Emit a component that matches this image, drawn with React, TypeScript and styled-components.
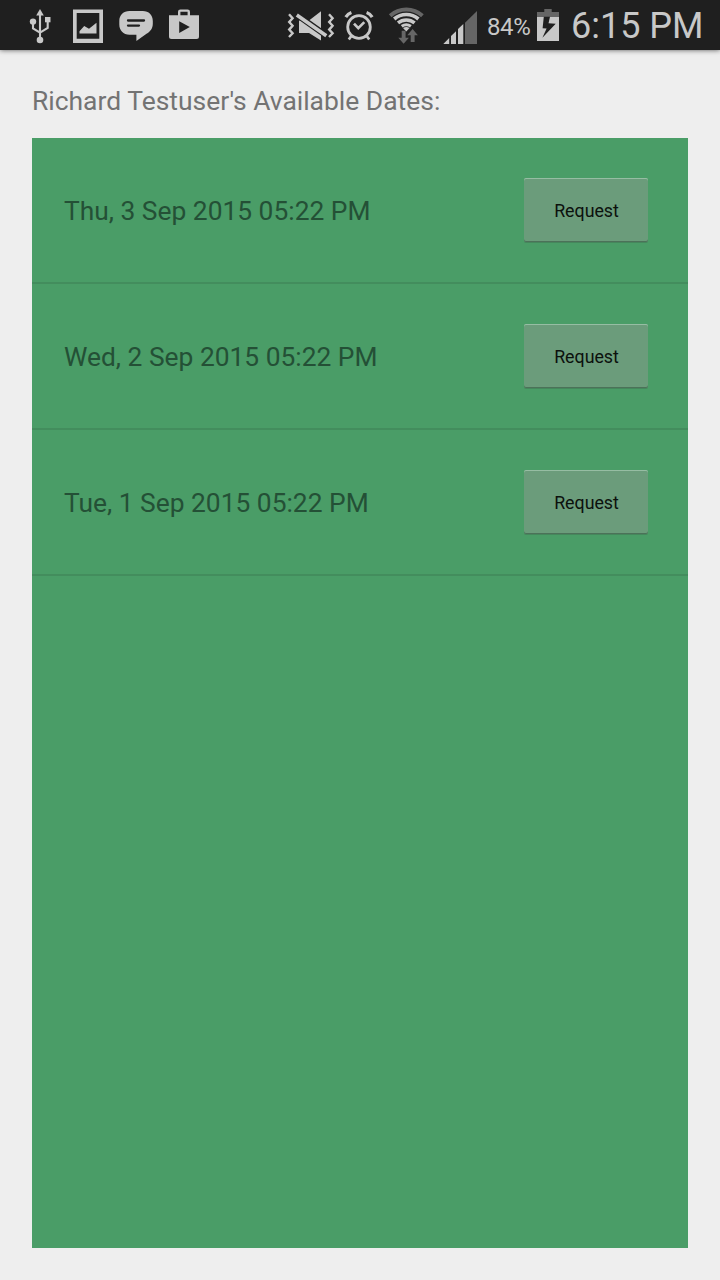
import React from "react";
import styled, { createGlobalStyle } from "styled-components";

const LIGHT = "#c8c8c8";
const DIM = "#666666";
const BAR = "#1f1f1f";

const GlobalStyle = createGlobalStyle`
  * { box-sizing: border-box; }
  body { margin: 0; background: #eeeeee; font-family: Roboto, sans-serif; }
`;

const Screen = styled.div`
  display: flex;
  flex-direction: column;
  width: 720px;
  height: 1280px;
  background: #eeeeee;
  overflow: hidden;
`;

const StatusBar = styled.header`
  display: flex;
  flex: none;
  align-items: flex-start;
  height: 50px;
  padding-left: 28px;
  background: ${BAR};
  color: ${LIGHT};
  box-shadow: 0 0 5px rgba(0, 0, 0, 0.65);
`;

const Icon = styled.svg<{ $gap?: number }>`
  display: block;
  flex: none;
  margin-left: ${(p) => p.$gap ?? 0}px;
`;

const Battery = styled.span`
  width: 48px;
  margin-left: 9px;
  font-size: 24px;
  letter-spacing: -0.4px;
  line-height: 54px;
  white-space: nowrap;
`;

const Clock = styled.span`
  margin-left: 12px;
  font-size: 36px;
  line-height: 53px;
  white-space: nowrap;
`;

const Content = styled.main`
  display: flex;
  flex: 1;
  flex-direction: column;
  padding: 32px 32px;
`;

const Title = styled.h1`
  height: 56px;
  margin: 0;
  color: #737373;
  font-size: 26.44px;
  font-weight: 400;
  line-height: 38px;
  white-space: nowrap;
`;

const DateList = styled.ul`
  flex: 1;
  margin: 0;
  padding: 0;
  background: #4a9d67;
  list-style: none;
`;

const DateRow = styled.li`
  display: flex;
  align-items: center;
  justify-content: space-between;
  height: 146px;
  padding: 0 40px 0 32px;
  border-bottom: 2px solid #438d5d;
`;

const DateText = styled.span`
  color: #245036;
  font-size: 26.37px;
  line-height: 32px;
  padding-top: 2px;
  white-space: nowrap;
`;

const RequestButton = styled.button`
  width: 124px;
  height: 64px;
  padding: 1px 0 0 1px;
  border: 0;
  border-radius: 2px;
  background: #6b9c7b;
  box-shadow: inset 0 1px 0 #96bda3, inset 0 -1px 0 #4c7259, 0 1px 0 rgba(60, 95, 72, 0.35);
  color: #0b110d;
  font-family: inherit;
  font-size: 17.8px;
`;

function UsbIcon() {
  return (
    <Icon width="24" height="50" viewBox="28 0 24 50" fill={LIGHT}>
      <path d="M40 9l3.8 6.5h-7.6z" />
      <path d="M40 14v25M33 21v7.5l7 4.2M47.7 20v8L40 32.7" fill="none" stroke={LIGHT} strokeWidth="2.1" />
      <circle cx="40" cy="40" r="3.3" />
      <circle cx="33" cy="21.6" r="3.2" />
      <path d="M45 17h5.5v5.3H45z" />
    </Icon>
  );
}

function ImageIcon() {
  return (
    <Icon $gap={21} width="30" height="50" viewBox="73 0 30 50" fill={LIGHT}>
      <path fillRule="evenodd" d="M73 9.5h30V43H73zM76.7 13v25.7h22.6V13z" />
      <path d="M79.5 33.5v-2.2l4.7-5.3 4.8 2.7 7.5-5.9v10.7z" />
    </Icon>
  );
}

function ChatIcon() {
  return (
    <Icon $gap={16} width="34" height="50" viewBox="119 0 34 50" fill={LIGHT}>
      <path d="M129.5 11h13.3c6 0 10 4 10 10v3c0 4.5-2.5 7.5-6.3 9.8L136.4 41v-6.2h-6.9c-6.2 0-10.2-4.4-10.2-10.3V21c0-6 4.2-10 10.2-10z" />
      <path d="M128 20.5h16M128 25.6h11" fill="none" stroke={BAR} strokeWidth="2.3" strokeLinecap="round" />
    </Icon>
  );
}

function StoreIcon() {
  return (
    <Icon $gap={16} width="30" height="50" viewBox="169 0 30 50" fill={LIGHT}>
      <path d="M179.2 16v-4.2q0-1.2 1.2-1.2h7.2q1.2 0 1.2 1.2V16" fill="none" stroke={LIGHT} strokeWidth="2.4" />
      <path fillRule="evenodd" d="M169 15.3h30v21.2q0 2.5-2.5 2.5h-25q-2.5 0-2.5-2.5zM179.2 21.3v11.6l10.6-5.8z" />
    </Icon>
  );
}

function SilentIcon() {
  return (
    <Icon $gap={88} width="48" height="50" viewBox="287 0 48 50" fill={LIGHT}>
      <path d="M299 20.5h10l12-9.3v29.3l-12-7.5h-10z" />
      <path d="M296.5 14.5l30 21.3" stroke={BAR} strokeWidth="6" />
      <path d="M296.8 15l29.5 20.7" stroke={LIGHT} strokeWidth="3.6" />
      <path d="M289 14.3l3.6 4-3.4 3.7 3.4 3.8-3.4 3.8 3.4 3.7-3.6 3.7M329 14.3l3.6 4-3.4 3.7 3.4 3.8-3.4 3.8 3.4 3.7-3.6 3.7" fill="none" stroke={LIGHT} strokeWidth="2.4" />
    </Icon>
  );
}

function AlarmIcon() {
  return (
    <Icon $gap={9} width="31" height="50" viewBox="344 0 31 50" fill="none" stroke={LIGHT}>
      <circle cx="359" cy="27" r="11.3" strokeWidth="2.8" />
      <path d="M354 23.6l4.3 4.5 6-6M351.3 36l-2.5 3.5M366.7 36l2.5 3.5" strokeWidth="2.7" />
      <path d="M345.8 17.2q2-3.3 5.6-4.6M372.2 17.2q-2-3.3-5.6-4.6" strokeWidth="3.2" />
    </Icon>
  );
}

function WifiIcon() {
  return (
    <Icon $gap={13} width="38" height="50" viewBox="388 0 38 50" fill="none">
      <path d="M390.2 15.7a24 24 0 0 1 32.2 0" stroke={DIM} strokeWidth="4" />
      <path d="M394.2 19a18.5 18.5 0 0 1 24.2 0" stroke={LIGHT} strokeWidth="3.7" />
      <path d="M398 22.9a13 13 0 0 1 16.6 0" stroke={LIGHT} strokeWidth="3.5" />
      <path d="M401.7 26.3a8 8 0 0 1 9.2 0" stroke={LIGHT} strokeWidth="3" />
      <path d="M403 28q3.3-1.8 6.6 0l-3.3 3.6z" fill={LIGHT} />
      <path d="M401.7 30.7h3.9v7h3.3l-5.3 6-5.3-6h3.4zM410.7 42v-6.8h-3.4l5.3-6.3 5.3 6.3h-3.3V42z" fill={DIM} />
    </Icon>
  );
}

function SignalIcon() {
  return (
    <Icon $gap={17} width="35" height="50" viewBox="443 0 35 50" fill={LIGHT}>
      <path d="M443.3 44l5.9-6v6zM451 44v-8l5-4.8V44zM458 44V29l5.3-5V44z" />
      <path d="M465 44V22.8L477 11v33z" fill={DIM} />
    </Icon>
  );
}

function BatteryIcon() {
  return (
    <Icon width="22" height="50" viewBox="537 0 22 50" $gap={2} fill={LIGHT}>
      <path d="M537 12h7.3V9h7.4v3h7.3v5h-22z" fill={DIM} />
      <path d="M537 17h22v24h-22z" />
      <path d="M543.8 16.7h6.2l-1.5 6.6 7.2.5-13.3 14 4.2-9.2-4-.4z" fill={BAR} />
    </Icon>
  );
}

const dates = [
  "Thu, 3 Sep 2015 05:22 PM",
  "Wed, 2 Sep 2015 05:22 PM",
  "Tue, 1 Sep 2015 05:22 PM",
];

export default function App() {
  return (
    <Screen>
      <GlobalStyle />
      <StatusBar>
        <UsbIcon />
        <ImageIcon />
        <ChatIcon />
        <StoreIcon />
        <SilentIcon />
        <AlarmIcon />
        <WifiIcon />
        <SignalIcon />
        <Battery>84%</Battery>
        <BatteryIcon />
        <Clock>6:15 PM</Clock>
      </StatusBar>
      <Content>
        <Title>Richard Testuser's Available Dates:</Title>
        <DateList>
          {dates.map((date) => (
            <DateRow key={date}>
              <DateText>{date}</DateText>
              <RequestButton>Request</RequestButton>
            </DateRow>
          ))}
        </DateList>
      </Content>
    </Screen>
  );
}
